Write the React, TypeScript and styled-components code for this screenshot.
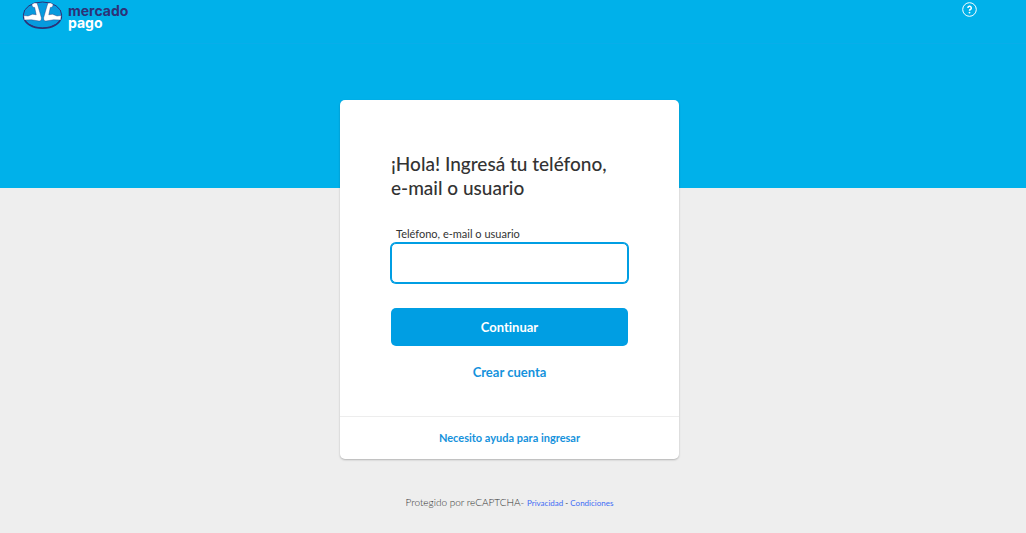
import React from "react";
import styled, { createGlobalStyle } from "styled-components";

const GlobalStyle = createGlobalStyle`
  *, *::before, *::after { box-sizing: border-box; }
  body {
    margin: 0;
    background: #eee;
    color: #333;
    font-family: Lato, "Open Sans", sans-serif;
  }
`;

const Page = styled.div`
  background: linear-gradient(#00b1ea, #00b1ea) top / 100% 188px no-repeat;
`;

const Header = styled.header`
  display: flex;
  justify-content: space-between;
  align-items: flex-start;
  height: 44px;
  padding: 0 48px 0 22px;
  border-bottom: 1px solid #08aeea;
`;

const Brand = styled.a`
  display: flex;
  gap: 4px;
  color: #fff;
  text-decoration: none;
`;

const Wordmark = styled.span`
  display: flex;
  flex-direction: column;
  padding-top: 5px;
  font: 700 14px/12px Inter, sans-serif;
`;

const Dark = styled.span`
  color: #2d3277;
`;

const HelpLink = styled.a`
  display: block;
  padding-top: 1px;
`;

const Main = styled.main`
  display: flex;
  flex-direction: column;
  align-items: center;
  padding: 56px 7px 20px 0;
`;

const Card = styled.section`
  width: 100%;
  max-width: 339px;
  background: #fff;
  border-radius: 5px;
  box-shadow: 0 1px 2px rgba(0, 0, 0, 0.25);
`;

const Form = styled.form`
  display: flex;
  flex-direction: column;
  padding: 52px 51px 34px;
`;

const Title = styled.h1`
  margin: 0 0 26px;
  font-size: 19px;
  line-height: 24px;
  font-weight: 500;
`;

const Label = styled.label`
  margin-bottom: 1px;
  padding-left: 5px;
  font-size: 11px;
  line-height: 16px;
`;

const Input = styled.input`
  height: 40px;
  padding: 0 12px;
  border: 1px solid #009ee3;
  border-radius: 5px;
  box-shadow: 0 0 0 1px #009ee3;
  outline: none;
  font: inherit;
`;

const Submit = styled.button`
  height: 38px;
  margin: 25px 0 16px;
  border: 0;
  border-radius: 5px;
  background: #009ee3;
  color: #fff;
  font: 700 13px/20px Lato, sans-serif;
  font-variant-ligatures: none;
`;

const ActionLink = styled.a<{ $small?: boolean }>`
  color: #1592dc;
  font-size: ${(p) => (p.$small ? 11 : 13)}px;
  line-height: 20px;
  font-weight: 700;
  text-align: center;
  text-decoration: none;
`;

const CardFooter = styled.footer`
  display: flex;
  justify-content: center;
  padding: 11px 0;
  border-top: 1px solid #ededed;
`;

const Legal = styled.p`
  margin: 34px 0 0;
  color: #333;
  font-size: 10px;
  font-weight: 300;
  line-height: 18px;
`;

const LegalLinks = styled.span`
  font-size: 8px;
  font-weight: 400;
`;

const LegalLink = styled.a`
  color: #3e6cf5;
  text-decoration: none;
`;

const Logo = () => (
  <svg width="42" height="31" viewBox="0 0 42 31" aria-hidden="true">
    <ellipse cx="20.5" cy="15" rx="19.2" ry="13" fill="#069ade" stroke="#2d3277" strokeWidth="1" />
    <path d="M1.4 16.5C2.5 24 10.5 28.3 20.5 28.3S38.5 24 39.6 16.5" fill="none" stroke="#2d3277" strokeWidth="1.4" />
    <g fill="#fff" stroke="#2d3277" strokeWidth=".4">
      <path d="M9.8 4.6L12 3L15 3L16 6L19.4 17.8C19.6 20 18.6 21.2 17 21L9.500 19.800L2.300 20L1.800 15.500L6 16L10.500 14.200L14.200 14.800L12.700 7.500L10.600 7Z" />
      <path d="M31.2 4.6L29 3L26 3L25 6L21.6 17.8C21.4 20 22.4 21.2 24 21L31.5 19.8L38.7 20L39.2 15.5L35 16L30.5 14.2L26.8 14.8L28.3 7.5L30.4 7Z" />
    </g>
  </svg>
);

const HelpIcon = () => (
  <svg width="16" height="16" viewBox="0 0 16 16" fill="none" stroke="#fff" aria-hidden="true">
    <circle cx="7.5" cy="8.5" r="6.8" />
    <path d="M5.9 7a1.7 1.7 0 1 1 2.5 1.5c-.7.4-.9.6-.9 1.3" strokeWidth="1.5" />
    <circle cx="7.5" cy="11.6" r=".9" fill="#fff" stroke="none" />
  </svg>
);

export default function App() {
  return (
    <Page>
      <GlobalStyle />
      <Header>
        <Brand href="#">
          <Logo />
          <Wordmark>
            <Dark>mercado</Dark>
            <span>pago</span>
          </Wordmark>
        </Brand>
        <HelpLink href="#" aria-label="Ayuda">
          <HelpIcon />
        </HelpLink>
      </Header>
      <Main>
        <Card>
          <Form onSubmit={(e) => e.preventDefault()}>
            <Title>¡Hola! Ingresá tu teléfono, e-mail o usuario</Title>
            <Label htmlFor="user">Teléfono, e-mail o usuario</Label>
            <Input id="user" type="text" />
            <Submit type="submit">Continuar</Submit>
            <ActionLink href="#">Crear cuenta</ActionLink>
          </Form>
          <CardFooter>
            <ActionLink href="#" $small>Necesito ayuda para ingresar</ActionLink>
          </CardFooter>
        </Card>
        <Legal>
          Protegido por reCAPTCHA-{" "}
          <LegalLinks>
            <LegalLink href="#">Privacidad</LegalLink> - <LegalLink href="#">Condiciones</LegalLink>
          </LegalLinks>
        </Legal>
      </Main>
    </Page>
  );
}
